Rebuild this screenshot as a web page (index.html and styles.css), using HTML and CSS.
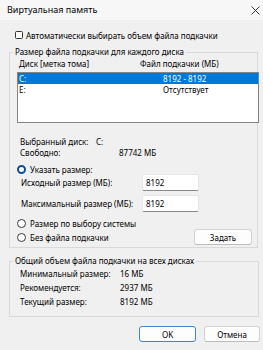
FILE: index.html
```html
<!DOCTYPE html>
<html lang="ru">
<head>
<meta charset="utf-8">
<link rel="stylesheet" href="styles.css">
</head>
<body>
<div class="titlebar">
  <span class="title">Виртуальная память</span>
  <svg class="close" width="9" height="9" viewBox="0 0 9 9"><path d="M0.5 0.5L8.5 8.5M8.5 0.5L0.5 8.5" stroke="#222" stroke-width="0.9" fill="none"/></svg>
</div>
<div class="content">
  <div class="check-row"><span class="checkbox"></span><span>Автоматически выбирать объем файла подкачки</span></div>

  <fieldset class="group group-disks">
    <legend>Размер файла подкачки для каждого диска</legend>
    <div class="list-head"><span>Диск [метка тома]</span><span>Файл подкачки (МБ)</span></div>
    <div class="list">
      <div class="list-row selected"><span>C:</span><span>8192 - 8192</span></div>
      <div class="list-row"><span>E:</span><span>Отсутствует</span></div>
    </div>
    <div class="info">
      <div class="info-row"><span class="info-label w1">Выбранный диск:</span><span>C:</span></div>
      <div class="info-row"><span class="info-label w2">Свободно:</span><span>87742 МБ</span></div>
    </div>
    <div class="radio-row first"><span class="radio on"></span><span>Указать размер:</span></div>
    <div class="field-row"><span class="field-label">Исходный размер (МБ):</span><span class="input">8192</span></div>
    <div class="field-row"><span class="field-label">Максимальный размер (МБ):</span><span class="input">8192</span></div>
    <div class="radio-row second"><span class="radio"></span><span>Размер по выбору системы</span></div>
    <div class="radio-row last">
      <span class="radio-label"><span class="radio"></span><span>Без файла подкачки</span></span>
      <span class="btn set">Задать</span>
    </div>
  </fieldset>

  <fieldset class="group group-total">
    <legend>Общий объем файла подкачки на всех дисках</legend>
    <div class="total-row"><span class="total-label">Минимальный размер:</span><span>16 МБ</span></div>
    <div class="total-row"><span class="total-label">Рекомендуется:</span><span>2937 МБ</span></div>
    <div class="total-row"><span class="total-label">Текущий размер:</span><span>8192 МБ</span></div>
  </fieldset>

  <div class="buttons">
    <span class="btn default">OK</span>
    <span class="btn">Отмена</span>
  </div>
</div>
</body>
</html>
```
FILE: styles.css
```css
* { box-sizing: border-box; }
html, body { margin: 0; padding: 0; }
body {
  width: 263px;
  height: 350px;
  overflow: hidden;
  background: #f0f0f0;
  font-family: "Noto Sans", "Open Sans", sans-serif;
  font-size: 8px;
  color: #000;
  white-space: nowrap;
}
.titlebar {
  height: 20px;
  background: #f7f7f7;
  display: flex;
  align-items: center;
  justify-content: space-between;
  padding: 0 3px 0 7px;
  font-size: 9px;
}
.title { line-height: 12px; }
.close { display: block; }
.content { padding: 0 5px 0 9px; }

.check-row {
  margin-top: 9px;
  height: 12px;
  display: flex;
  align-items: center;
  padding-left: 6px;
  gap: 3px;
}
.checkbox {
  width: 8px; height: 8px;
  border: 1px solid #333;
  border-radius: 1.5px;
  background: #fff;
}

.group {
  margin: 0;
  border: 1px solid #d9d9d9;
  padding: 0 0 0 7px;
  min-width: 0;
}
.group legend {
  padding: 0 2px;
  margin-left: -4px;
  line-height: 12px;
}
.group-disks { margin-top: 5px; padding-bottom: 2px; }

.list-head {
  display: grid;
  grid-template-columns: 121px 1fr;
  padding-left: 2px;
  height: 12px;
  line-height: 12px;
  margin-bottom: 2px;
}
.list {
  margin-right: -2px;
  height: 51px;
  border: 1px solid #848484;
  background: #fff;
}
.list-row {
  display: grid;
  grid-template-columns: 144px 1fr;
  padding-left: 1px;
  height: 11px;
  line-height: 11px;
}
.list-row.selected { background: #0078d7; color: #fff; }

.info { margin-top: 13px; padding-left: 3px; }
.info-row { display: flex; height: 11px; line-height: 11px; }
.info-label.w1 { width: 76px; }
.info-label.w2 { width: 99px; }

.radio-row {
  display: flex;
  align-items: center;
  gap: 4px;
}
.radio-row.first { margin-top: 6px; height: 10px; }
.radio-row.second { margin-top: 5px; height: 12px; }
.radio-row.last { height: 16px; justify-content: space-between; padding-right: 5px; }
.radio-label { display: flex; align-items: center; gap: 4px; }
.radio {
  width: 9px; height: 9px;
  border-radius: 50%;
  border: 1px solid #3a3a3a;
  background: #fff;
  flex: none;
}
.radio.on { border: 2.5px solid #0a4f9e; background: #fff; }

.field-row {
  display: flex;
  align-items: center;
  padding-left: 4px;
  height: 17px;
  margin-top: 4px;
}
.radio-row.first + .field-row { margin-top: 0; }
.field-label { width: 121px; }
.input {
  width: 57px;
  height: 17px;
  background: #fff;
  border: 1px solid #e6e6e6;
  border-bottom: 1px solid #8a8a8a;
  border-radius: 2px;
  padding-left: 3px;
  line-height: 15px;
}

.btn {
  display: flex;
  align-items: center;
  justify-content: center;
  height: 16px;
  border: 1px solid #d3d3d3;
  border-bottom-color: #bcbcbc;
  border-radius: 3px;
  background: #fdfdfd;
}
.btn.set { width: 58px; }

.group-total { margin-top: 7px; padding-bottom: 7px; margin-right: -1px; }
.total-row { display: flex; height: 14px; line-height: 14px; padding-left: 3px; }
.total-label { width: 100px; }

.buttons {
  display: flex;
  justify-content: flex-end;
  gap: 8px;
  margin-top: 9px;
  margin-right: -2px;
}
.buttons .btn { width: 57px; }
.buttons .btn:last-child { width: 56px; }
.btn.default { border: 1px solid #3d86d4; }
```
